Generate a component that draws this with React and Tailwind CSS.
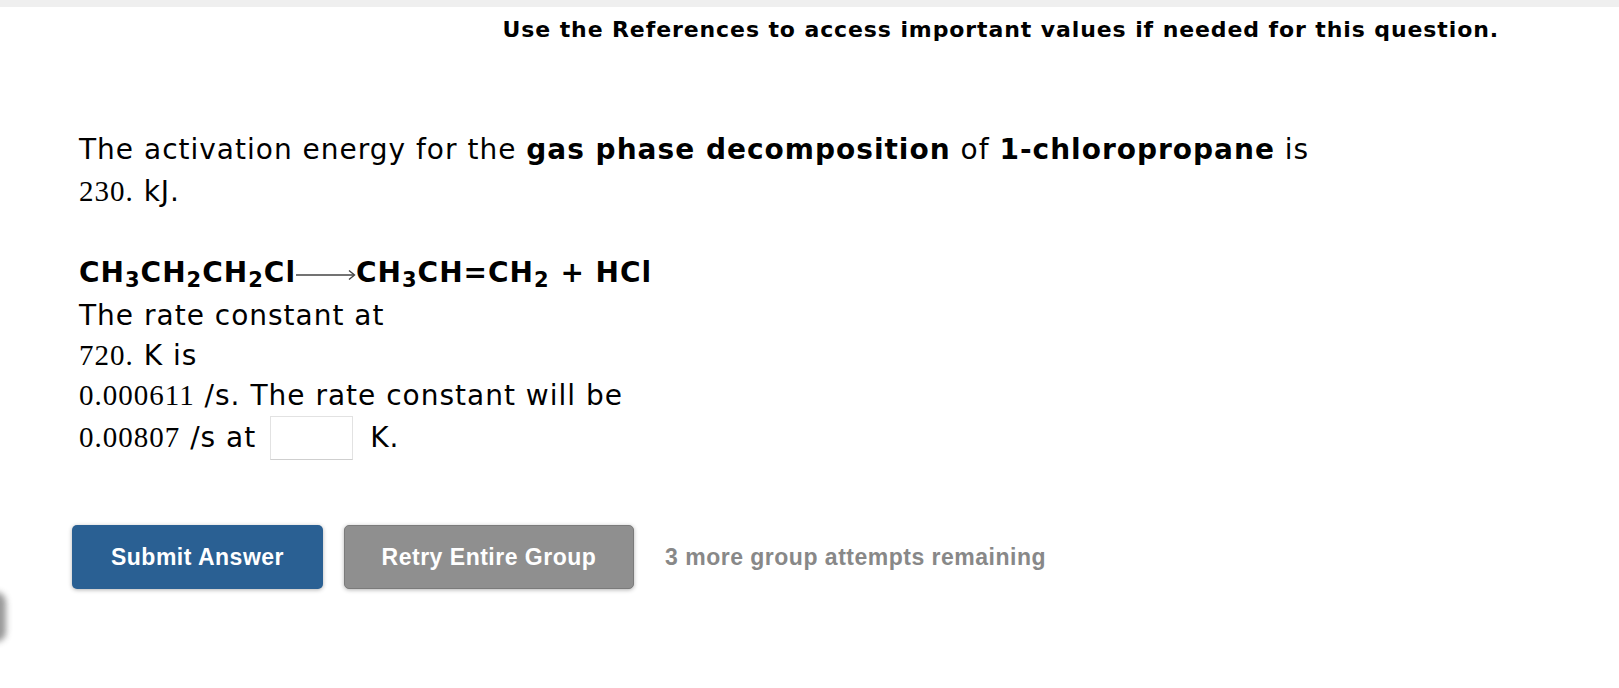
import React from "react";

const serif = "font-['Liberation_Serif','Times_New_Roman',serif] text-[29px] leading-none";
const sub = "text-[21px] leading-none";

const App = () => {
  return (
    <div className="relative w-full h-[688px] bg-white overflow-hidden font-['DejaVu_Sans',Verdana,sans-serif] text-black">
      <div className="h-[7px] bg-[#efefef]" />

      {/* References notice */}
      <div className="mt-[11px] flex justify-end pr-[120px]">
        <p className="text-[22px] leading-[24px] font-bold tracking-[0.9px]">
          Use the References to access important values if needed for this question.
        </p>
      </div>

      {/* Question */}
      <div className="pl-[79px] mt-[87px] text-[28px] tracking-[1px]">
        <p className="leading-[42px]">
          The activation energy for the <b>gas phase decomposition</b> of{" "}
          <b>1-chloropropane</b> is
          <br />
          <span className={serif}>230.</span> kJ.
        </p>

        <p className="mt-[39px] h-[42px] leading-[42px] font-bold flex items-baseline">
          <span>
            CH<sub className={sub}>3</sub>CH<sub className={sub}>2</sub>CH
            <sub className={sub}>2</sub>Cl
          </span>
          <svg width="60" height="14" viewBox="0 0 60 14" className="self-center mt-[4px]">
            <line x1="0" y1="7" x2="58" y2="7" stroke="#444" strokeWidth="1.4" />
            <path d="M53 2.5 L58.5 7 L53 11.5" fill="none" stroke="#444" strokeWidth="1.4" />
          </svg>
          <span>
            CH<sub className={sub}>3</sub>CH=CH<sub className={sub}>2</sub> + HCl
          </span>
        </p>

        <div className="mt-[2px] leading-[40px]">
          <p>The rate constant at</p>
          <p>
            <span className={serif}>720.</span> K is
          </p>
          <p>
            <span className={serif}>0.000611</span> /s. The rate constant will be
          </p>
          <p className="flex items-center">
            <span>
              <span className={serif}>0.00807</span> /s at
            </span>
            <input
              type="text"
              className="ml-[14px] mr-[17px] w-[83px] h-[44px] border border-[#e2e2e2] border-b-[#cfcfcf] bg-white outline-none"
            />
            <span>K.</span>
          </p>
        </div>
      </div>

      {/* Actions */}
      <div className="mt-[65px] pl-[72px] flex items-center font-['Liberation_Sans',Arial,sans-serif] font-bold text-[23px] tracking-[0.5px]">
        <button className="w-[251px] h-[64px] rounded-[5px] bg-[#2a6093] text-white shadow-[0_1px_4px_rgba(0,0,0,0.3)]">
          Submit Answer
        </button>
        <button className="ml-[21px] w-[290px] h-[64px] rounded-[5px] bg-[#8f8f8f] border border-[#7b7b7b] text-white shadow-[0_1px_4px_rgba(0,0,0,0.3)]">
          Retry Entire Group
        </button>
        <span className="ml-[31px] text-[#888888]">3 more group attempts remaining</span>
      </div>

      {/* edge shadow */}
      <div className="absolute left-[-14px] top-[592px] w-[20px] h-[50px] rounded-full bg-[#555] blur-[3px] opacity-60" />
    </div>
  );
};

export default App;
